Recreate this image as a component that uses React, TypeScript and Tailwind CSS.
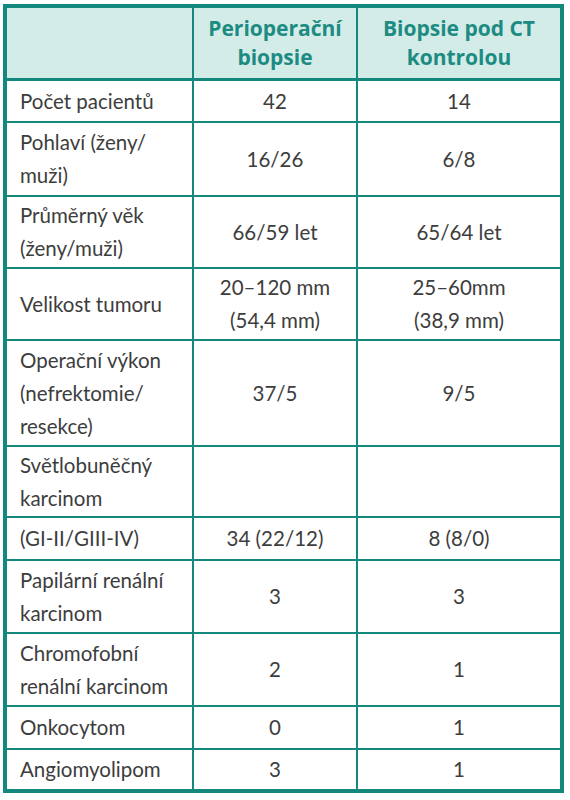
import React from "react"

type Row = { h: string; label: string[]; a: string[]; b: string[] }

const rows: Row[] = [
  { h: "h-[40px]", label: ["Počet pacientů"], a: ["42"], b: ["14"] },
  { h: "h-[72px]", label: ["Pohlaví (ženy/", "muži)"], a: ["16/26"], b: ["6/8"] },
  { h: "h-[70px]", label: ["Průměrný věk", "(ženy/muži)"], a: ["66/59 let"], b: ["65/64 let"] },
  { h: "h-[70px]", label: ["Velikost tumoru"], a: ["20–120 mm", "(54,4 mm)"], b: ["25–60mm", "(38,9 mm)"] },
  { h: "h-[104px]", label: ["Operační výkon", "(nefrektomie/", "resekce)"], a: ["37/5"], b: ["9/5"] },
  { h: "h-[69px]", label: ["Světlobuněčný", "karcinom"], a: [], b: [] },
  { h: "h-[41px]", label: ["(GI-II/GIII-IV)"], a: ["34 (22/12)"], b: ["8 (8/0)"] },
  { h: "h-[71px]", label: ["Papilární renální", "karcinom"], a: ["3"], b: ["3"] },
  { h: "h-[71px]", label: ["Chromofobní", "renální karcinom"], a: ["2"], b: ["1"] },
  { h: "h-[41px]", label: ["Onkocytom"], a: ["0"], b: ["1"] },
  { h: "h-[39px]", label: ["Angiomyolipom"], a: ["3"], b: ["1"] },
]

const Lines = ({ lines }: { lines: string[] }) => (
  <>
    {lines.map((l, i) => (
      <span key={i} className="block">{l}</span>
    ))}
  </>
)

export default function App() {
  return (
    <div className="w-[570px] h-[800px] bg-white pt-[4px] pl-[3px] font-['Lato','Open_Sans',sans-serif]">
      <div className="w-[561px] border-4 border-[#15887e]">
        {/* header */}
        <div className="grid grid-cols-[185px_164px_204px] h-[73px] bg-[#d3ece8] border-b-[3px] border-[#15887e]">
          <div />
          <div className="border-l-2 border-[#15887e] flex flex-col items-center justify-center font-['Open_Sans',sans-serif] text-[21px] leading-[29px] font-bold text-[#1d8b82]">
            <span>Perioperační</span>
            <span>biopsie</span>
          </div>
          <div className="border-l-2 border-[#15887e] flex flex-col items-center justify-center font-['Open_Sans',sans-serif] text-[21px] leading-[29px] font-bold text-[#1d8b82]">
            <span>Biopsie pod CT</span>
            <span>kontrolou</span>
          </div>
        </div>
        {rows.map((r, i) => (
          <div
            key={i}
            className={`grid grid-cols-[185px_164px_204px] text-[20.5px] leading-[33px] text-[#3d3d3d] ${r.h} ${i > 0 ? "border-t-2 border-[#15887e] box-content" : ""}`}
          >
            <div className="flex flex-col justify-center pl-[13px]">
              <Lines lines={r.label} />
            </div>
            <div className="border-l-2 border-[#15887e] flex flex-col items-center justify-center text-center">
              <Lines lines={r.a} />
            </div>
            <div className="border-l-2 border-[#15887e] flex flex-col items-center justify-center text-center">
              <Lines lines={r.b} />
            </div>
          </div>
        ))}
      </div>
    </div>
  )
}
